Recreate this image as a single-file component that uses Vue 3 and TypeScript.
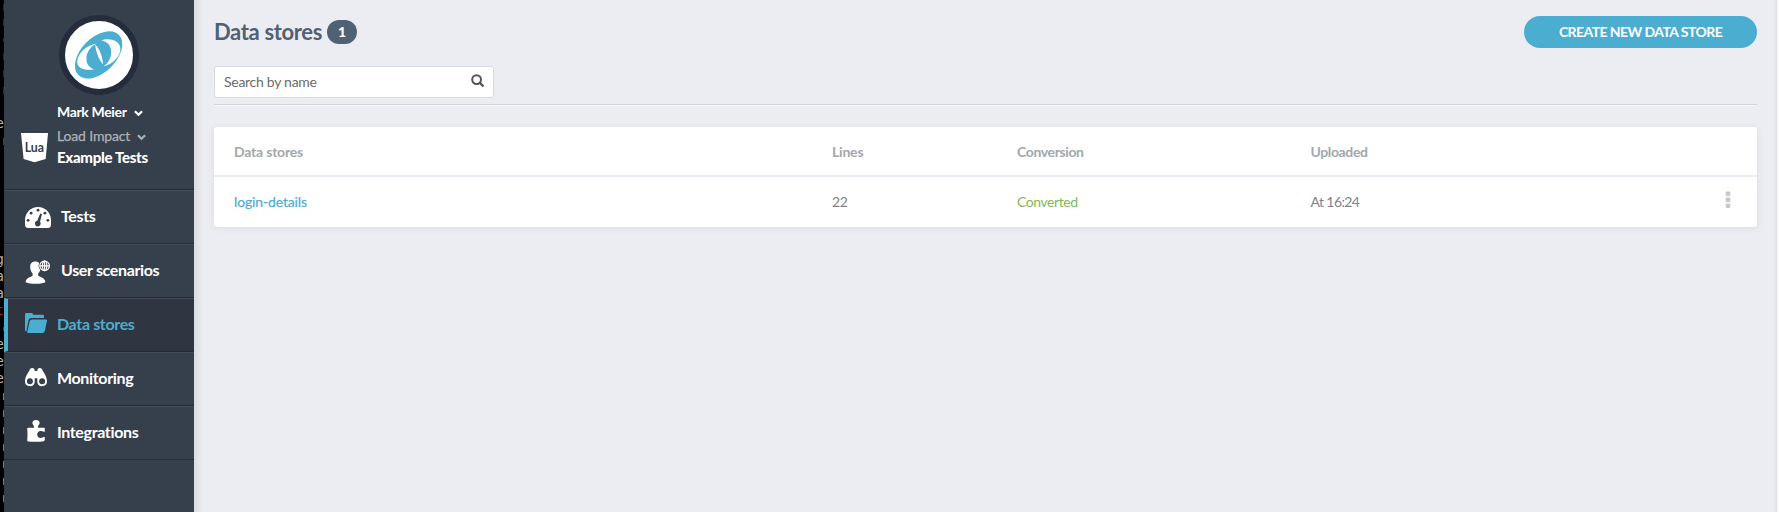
<script setup lang="ts">
interface MenuItem {
  id: string
  label: string
  active?: boolean
}

interface StripRow {
  text?: string
  kind: string
}

const menu: MenuItem[] = [
  { id: 'tests', label: 'Tests' },
  { id: 'scenarios', label: 'User scenarios' },
  { id: 'stores', label: 'Data stores', active: true },
  { id: 'monitoring', label: 'Monitoring' },
  { id: 'integrations', label: 'Integrations' },
]

const blank = (n: number): StripRow[] => Array.from({ length: n }, () => ({ kind: 'none' }))
const bars = (n: number, kind: string): StripRow[] => Array.from({ length: n }, () => ({ kind }))
const strip: StripRow[] = [
  ...bars(2, 'red'),
  { kind: 'red short' },
  ...bars(3, 'red'),
  ...blank(1),
  { kind: 'glyph', text: 'e' },
  { kind: 'blue' },
  ...blank(6),
  { kind: 'glyph', text: 'g' },
  { kind: 'glyph', text: 'a' },
  { kind: 'glyph', text: 'a' },
  { kind: 'glyph crimson', text: 't' },
  { kind: 'blue short' },
  { kind: 'glyph', text: 'e' },
  { kind: 'glyph', text: 'e' },
  { kind: 'glyph', text: 'e' },
  ...bars(7, 'slate'),
]
</script>

<template>
  <div class="screen">
    <div class="strip">
      <div v-for="(row, i) in strip" :key="i" class="strip-row" :class="row.kind">
        <span>{{ row.text }}</span>
      </div>
    </div>

    <aside class="sidebar">
      <div class="profile">
        <div class="avatar">
          <svg width="68" height="68" viewBox="65 21 68 68">
            <ellipse cx="98.6" cy="54.9" rx="28.6" ry="17.4" transform="rotate(-45 98.6 54.9)" fill="#4badd0" />
            <path d="M96.3 43.7C87 44.5 78 53 77.3 61C76.6 68 84 71.2 94.5 69.3C89 68 86.2 63.5 86.4 58C86.6 52 90.5 46.5 96.3 43.7Z" fill="#fff" />
            <path d="M101 40.3C110 37.7 119.5 40.5 120.3 48C121 56 113 64.2 103.6 66.3C109 62.5 111.5 57 111.2 51.5C110.9 45.5 107.3 41.5 101 40.3Z" fill="#fff" />
            <path d="M95.2 44.5C99.5 48.5 102.6 56.5 103 64.3C98.8 59.5 95.8 52 95.2 44.5Z" fill="#fff" />
          </svg>
        </div>
        <div class="account">
          <svg class="lua" width="27" height="30" viewBox="0 0 27 30">
            <path d="M0 0H27L24.7 26L13.5 29.2L2.6 26Z" fill="#fff" />
            <text x="3.7" y="19.2" textLength="19.3" lengthAdjust="spacingAndGlyphs" class="lua-text">Lua</text>
          </svg>
          <div class="names">
            <div class="name user"><span>Mark Meier</span><svg class="chev" width="9" height="7" viewBox="0 0 9 7"><path d="M.9 1.2L4.5 4.8L8.1 1.2" /></svg></div>
            <div class="name org"><span>Load Impact</span><svg class="chev" width="9" height="7" viewBox="0 0 9 7"><path d="M.9 1.2L4.5 4.8L8.1 1.2" /></svg></div>
            <div class="name project"><span>Example Tests</span></div>
          </div>
        </div>
      </div>

      <nav class="menu">
        <a v-for="item in menu" :key="item.id" class="item" :class="[item.id, { active: item.active }]">
          <svg v-if="item.id === 'tests'" class="icon" width="26" height="22" viewBox="0 0 26 22">
            <path d="M13 0C5.8 0 0 5.9 0 13V17.5Q0 21 3.5 21H22.5Q26 21 26 17.5V13C26 5.9 20.2 0 13 0Z" fill="currentColor" />
            <g fill="#363f4c">
              <circle cx="13" cy="3.2" r="1.4" /><circle cx="6.1" cy="6.2" r="1.4" /><circle cx="19.9" cy="6.2" r="1.4" />
              <circle cx="3.1" cy="13.3" r="1.4" /><circle cx="22.9" cy="13.3" r="1.4" />
              <circle cx="12.8" cy="16.6" r="2.8" />
              <path d="M15.2 6.4L17 6.9L14.7 16L11.7 15.3Z" />
            </g>
          </svg>
          <svg v-else-if="item.id === 'scenarios'" class="icon" width="26" height="24" viewBox="0 0 26 24">
            <path d="M10.3 1.5C6.8 1.5 5 4 5.2 7C5.3 9.4 5.8 11.7 7.6 13.6V15.5C7 17.2 1 17 .6 22.2C6 24.3 15 24.3 20.4 22.2C20 17 14 17.2 13.2 15.5V13.6C15 11.7 15.7 9.4 15.8 7C15.9 4 13.8 1.5 10.3 1.5Z" fill="currentColor" />
            <circle cx="19.6" cy="5.8" r="6.1" fill="#363f4c" />
            <g fill="none" stroke="currentColor" stroke-width="1.2">
              <circle cx="19.6" cy="5.8" r="4.8" /><ellipse cx="19.6" cy="5.8" rx="2.2" ry="4.8" />
              <path d="M14.8 5.8H24.4M19.6 1V10.6" />
            </g>
          </svg>
          <svg v-else-if="item.id === 'stores'" class="icon" width="22" height="21" viewBox="0 0 22 21">
            <path d="M0 1.3Q0 0 1.5 0H7Q8 0 8 1.7H18Q19 1.7 19 3V5.1H6.4Q4.2 5.1 3.5 7.2L1.3 18.7Q0 18.2 0 17Z" fill="currentColor" />
            <path d="M7 6.5H21Q22.2 6.5 22 7.8L19.8 18Q19.3 20 17.5 20H3Q2 20 2.3 18.5L4.7 8.3Q5.2 6.5 7 6.5Z" fill="currentColor" />
          </svg>
          <svg v-else-if="item.id === 'monitoring'" class="icon" width="22" height="19" viewBox="0 0 22 19">
            <path d="M4.5 2.3Q5 0 7.3 0Q9.6 0 9.8 3H12.2Q12.4 0 14.7 0Q17 0 17.5 2.3C19.2 5.2 22 9.2 22 13.4A4.9 4.9 0 0 1 12.3 14.2V10.2H9.7V14.2A4.9 4.9 0 0 1 0 13.4C0 9.2 2.8 5.2 4.5 2.3Z" fill="currentColor" />
            <circle cx="4.9" cy="13.3" r="3" fill="#363f4c" /><circle cx="17.1" cy="13.3" r="3" fill="#363f4c" />
          </svg>
          <svg v-else class="icon" width="18" height="22" viewBox="0 0 18 22">
            <path d="M9 0C11.3 0 12.6 1.3 12.6 3C12.6 4.8 10.8 5 11 7.7H17Q17.8 7.7 17.8 8.5V11.6C16.7 12 15.7 10.9 13.8 10.9C11.4 10.9 10.2 12.5 10.2 14.4C10.2 16.4 11.5 17.9 13.8 17.9C15.7 17.9 16.6 16.8 17.8 17.2C18 19 17.8 20.6 17 21.2C12 22 5.5 22 1 21.4Q.1 21.3 .2 20.2C.6 17 .6 11.5 .2 8.7Q.2 7.7 1.2 7.7H7C7.2 5 5.4 4.8 5.4 3C5.4 1.3 6.7 0 9 0Z" fill="currentColor" />
          </svg>
          <span>{{ item.label }}</span>
        </a>
      </nav>
    </aside>

    <main class="content">
      <header class="head">
        <h1>Data stores</h1>
        <span class="badge">1</span>
        <button class="create"><span>CREATE NEW DATA STORE</span></button>
      </header>
      <div class="tools">
        <div class="search">
          <span>Search by name</span>
          <svg width="14" height="14" viewBox="0 0 14 14" fill="none" stroke="#555"><circle cx="5.6" cy="5.6" r="4.4" stroke-width="2" /><path d="M8.9 8.9L12.5 12.5" stroke-width="2.2" /></svg>
        </div>
      </div>
      <section class="card">
        <div class="row labels">
          <span>Data stores</span><span>Lines</span><span class="tight">Conversion</span><span class="tight">Uploaded</span>
        </div>
        <div class="row values">
          <span class="link">login-details</span><span class="lines">22</span><span class="ok">Converted</span><span class="time">At 16:24</span>
          <svg class="dots" width="6" height="18" viewBox="0 0 6 18" fill="#c8c8c8"><circle cx="3" cy="2.7" r="2.5" /><circle cx="3" cy="8.7" r="2.5" /><circle cx="3" cy="14.8" r="2.5" /></svg>
        </div>
      </section>
    </main>
    <div class="edge"></div>
  </div>
</template>

<style>
body {
  margin: 0;
  overflow: hidden;
}
</style>

<style scoped>
* {
  box-sizing: border-box;
}
.screen {
  display: flex;
  width: 1779px;
  height: 512px;
  overflow: hidden;
  background: #ecedf2;
  font-family: Lato, "Open Sans", sans-serif;
  font-size: 14px;
}
.strip {
  flex: none;
  width: 4px;
  height: 512px;
  overflow: hidden;
  background: #000;
}
.strip-row {
  display: flex;
  align-items: center;
  justify-content: flex-end;
  width: 4px;
  height: 17px;
  overflow: hidden;
}
.strip-row:first-child {
  height: 14px;
}
.strip-row span {
  flex: none;
  width: 1px;
  height: 7px;
}
.strip-row.short span {
  height: 4px;
}
.strip-row.red span { background: #5d1919; }
.strip-row.blue span { background: #24476f; }
.strip-row.slate span { background: #6d7e8e; }
.strip-row.glyph span {
  width: auto;
  height: 17px;
  font: 14px/15px "DejaVu Sans Mono", monospace;
  color: #b5b1aa;
}
.strip-row.crimson span { color: #a32222; }

.sidebar {
  flex: none;
  width: 190px;
  height: 512px;
  background: #363f4c;
  color: #fff;
}
.profile {
  height: 189px;
  padding-top: 15px;
}
.avatar {
  width: 80px;
  height: 80px;
  margin-left: 55px;
  border: 6px solid #252c3c;
  border-radius: 50%;
  background: #fff;
}
.avatar svg {
  display: block;
}
.account {
  display: flex;
  padding-left: 17px;
}
.lua {
  flex: none;
  margin-top: 38px;
}
.lua-text {
  font: bold 14px Lato, sans-serif;
  fill: #363f4c;
}
.names {
  margin: 7px 0 0 9px;
  white-space: nowrap;
}
.name {
  display: flex;
  align-items: center;
  height: 20px;
  line-height: 20px;
  font-weight: bold;
}
.name.org {
  height: 24px;
  margin-top: 2px;
  margin-bottom: -1px;
  color: #adb1b6;
  font-weight: normal;
  -webkit-text-stroke: .25px #adb1b6;
}
.user span { letter-spacing: -.35px; }
.org span { letter-spacing: -.15px; }
.project span {
  font-size: 15px;
  font-weight: 900;
  letter-spacing: -.3px;
}
.chev {
  margin: 3px 0 0 7px;
  fill: none;
  stroke: currentColor;
  stroke-width: 2.2;
}

.menu {
  border-top: 1px solid #262d37;
}
.item {
  display: flex;
  align-items: center;
  height: 54px;
  padding-left: 21px;
  border-top: 1px solid #424b57;
  border-bottom: 1px solid #262d37;
  font-size: 16px;
  font-weight: bold;
  letter-spacing: -.35px;
  white-space: nowrap;
}
.item span {
  margin-top: -4px;
}
.item.active {
  padding-left: 17px;
  border-left: 4px solid #4badd0;
  background: #2f3541;
  color: #4badd0;
}
.icon {
  flex: none;
  margin-right: 10px;
}
.tests .icon { margin-top: 2px; }
.scenarios .icon { margin-top: 2px; }
.stores .icon { margin-top: -3px; }
.monitoring .icon { margin-top: -3px; }
.integrations .icon { margin: -5px 12px 0 2px; }

.content {
  flex: 1;
  height: 512px;
  padding: 16px 20px 0;
  background:
    linear-gradient(to right, #dbdce1, #e6e7ec 6px, transparent 10px),
    linear-gradient(to left, #dfe0e4, transparent 4px);
}
.head {
  display: flex;
  align-items: center;
  height: 32px;
}
h1 {
  width: 113px;
  margin: 0;
  color: #506173;
  font-size: 22px;
  line-height: 32px;
  letter-spacing: -.35px;
  white-space: nowrap;
}
.badge {
  width: 30px;
  height: 24px;
  border-radius: 12px;
  background: #506173;
  color: #fff;
  font-size: 14px;
  font-weight: 900;
  line-height: 24px;
  text-align: center;
}
.create {
  width: 233px;
  height: 32px;
  margin-left: auto;
  padding: 0;
  border: 0;
  border-radius: 16px;
  background: #4badd0;
  color: #fff;
  font: bold 14px/32px Lato, sans-serif;
  letter-spacing: -.56px;
  white-space: nowrap;
}
.tools {
  height: 57px;
  padding-top: 18px;
  border-bottom: 1px solid #d0d2d6;
  box-shadow: 0 1px #f8f8fa;
}
.search {
  display: flex;
  align-items: center;
  justify-content: space-between;
  width: 280px;
  height: 32px;
  padding: 0 8px 0 9px;
  border: 1px solid #d8dae2;
  border-radius: 3px;
  background: #fff;
  color: #6b6b6b;
  letter-spacing: -.28px;
}
.search span {
  margin-top: -2px;
}
.search svg {
  margin-top: -2px;
}
.card {
  height: 100px;
  margin-top: 22px;
  border-radius: 3px;
  background: #fff;
  box-shadow: 0 1px 6px rgba(60, 65, 80, .1);
}
.row {
  display: grid;
  grid-template-columns: 598px 185px 293.5px 1fr auto;
  align-items: center;
  height: 50px;
  padding: 0 26px 0 20px;
}
.labels {
  border-bottom: 2px solid #ecedf2;
  color: #a2a7ab;
  font-weight: bold;
  letter-spacing: -.2px;
}
.labels .tight {
  letter-spacing: -.38px;
}
.values {
  color: #7c838e;
}
.values span {
  margin-top: -2px;
}
.link {
  color: #4badd0;
  letter-spacing: -.14px;
  -webkit-text-stroke: .2px #4badd0;
}
.lines { letter-spacing: -.4px; }
.ok {
  color: #7fb857;
  letter-spacing: -.43px;
}
.time { letter-spacing: -.6px; }
.dots { margin-top: -4px; }
.edge {
  flex: none;
  width: 2px;
  background: #f8f8fa;
}
</style>
